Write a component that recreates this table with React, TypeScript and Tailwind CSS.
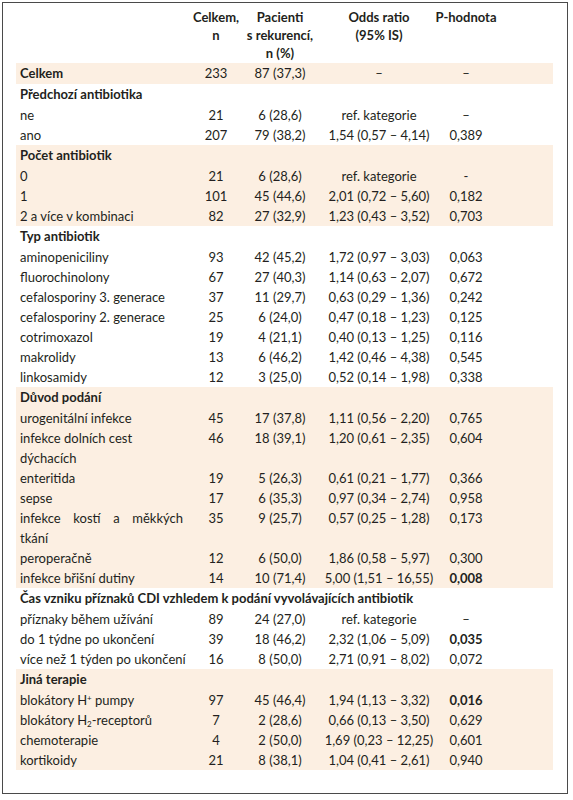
import React from "react";

type Row = {
  label: React.ReactNode;
  n?: string;
  rec?: string;
  or?: string;
  p?: string;
  bold?: boolean;
};

type Group = {
  title?: string;
  shaded: boolean;
  rows: Row[];
};

const cols = "grid grid-cols-[174px_52px_76px_122px_52px_61px]";

const justifyLine = (words: string[]) => (
  <span className="flex w-[163px] justify-between">
    {words.map((w) => (
      <span key={w}>{w}</span>
    ))}
  </span>
);

const groups: Group[] = [
  {
    shaded: true,
    rows: [{ label: <b>Celkem</b>, n: "233", rec: "87 (37,3)", or: "–", p: "–" }],
  },
  {
    title: "Předchozí antibiotika",
    shaded: false,
    rows: [
      { label: "ne", n: "21", rec: "6 (28,6)", or: "ref. kategorie", p: "–" },
      { label: "ano", n: "207", rec: "79 (38,2)", or: "1,54 (0,57 – 4,14)", p: "0,389" },
    ],
  },
  {
    title: "Počet antibiotik",
    shaded: true,
    rows: [
      { label: "0", n: "21", rec: "6 (28,6)", or: "ref. kategorie", p: "-" },
      { label: "1", n: "101", rec: "45 (44,6)", or: "2,01 (0,72 – 5,60)", p: "0,182" },
      { label: "2 a více v kombinaci", n: "82", rec: "27 (32,9)", or: "1,23 (0,43 – 3,52)", p: "0,703" },
    ],
  },
  {
    title: "Typ antibiotik",
    shaded: false,
    rows: [
      { label: "aminopeniciliny", n: "93", rec: "42 (45,2)", or: "1,72 (0,97 – 3,03)", p: "0,063" },
      { label: "fluorochinolony", n: "67", rec: "27 (40,3)", or: "1,14 (0,63 – 2,07)", p: "0,672" },
      { label: "cefalosporiny 3. generace", n: "37", rec: "11 (29,7)", or: "0,63 (0,29 – 1,36)", p: "0,242" },
      { label: "cefalosporiny 2. generace", n: "25", rec: "6 (24,0)", or: "0,47 (0,18 – 1,23)", p: "0,125" },
      { label: "cotrimoxazol", n: "19", rec: "4 (21,1)", or: "0,40 (0,13 – 1,25)", p: "0,116" },
      { label: "makrolidy", n: "13", rec: "6 (46,2)", or: "1,42 (0,46 – 4,38)", p: "0,545" },
      { label: "linkosamidy", n: "12", rec: "3 (25,0)", or: "0,52 (0,14 – 1,98)", p: "0,338" },
    ],
  },
  {
    title: "Důvod podání",
    shaded: true,
    rows: [
      { label: "urogenitální infekce", n: "45", rec: "17 (37,8)", or: "1,11 (0,56 – 2,20)", p: "0,765" },
      {
        label: (
          <>
            infekce dolních cest
            <br />
            dýchacích
          </>
        ),
        n: "46",
        rec: "18 (39,1)",
        or: "1,20 (0,61 – 2,35)",
        p: "0,604",
      },
      { label: "enteritida", n: "19", rec: "5 (26,3)", or: "0,61 (0,21 – 1,77)", p: "0,366" },
      { label: "sepse", n: "17", rec: "6 (35,3)", or: "0,97 (0,34 – 2,74)", p: "0,958" },
      {
        label: (
          <>
            {justifyLine(["infekce", "kostí", "a", "měkkých"])}
            tkání
          </>
        ),
        n: "35",
        rec: "9 (25,7)",
        or: "0,57 (0,25 – 1,28)",
        p: "0,173",
      },
      { label: "peroperačně", n: "12", rec: "6 (50,0)", or: "1,86 (0,58 – 5,97)", p: "0,300" },
      { label: "infekce břišní dutiny", n: "14", rec: "10 (71,4)", or: "5,00 (1,51 – 16,55)", p: "0,008", bold: true },
    ],
  },
  {
    title: "Čas vzniku příznaků CDI vzhledem k podání vyvolávajících antibiotik",
    shaded: false,
    rows: [
      { label: "příznaky během užívání", n: "89", rec: "24 (27,0)", or: "ref. kategorie", p: "–" },
      { label: "do 1 týdne po ukončení", n: "39", rec: "18 (46,2)", or: "2,32 (1,06 – 5,09)", p: "0,035", bold: true },
      { label: "více než 1 týden po ukončení", n: "16", rec: "8 (50,0)", or: "2,71 (0,91 – 8,02)", p: "0,072" },
    ],
  },
  {
    title: "Jiná terapie",
    shaded: true,
    rows: [
      {
        label: (
          <>
            blokátory H<sup className="text-[8px]">+</sup> pumpy
          </>
        ),
        n: "97",
        rec: "45 (46,4)",
        or: "1,94 (1,13 – 3,32)",
        p: "0,016",
        bold: true,
      },
      {
        label: (
          <>
            blokátory H<sub className="text-[8px]">2</sub>-receptorů
          </>
        ),
        n: "7",
        rec: "2 (28,6)",
        or: "0,66 (0,13 – 3,50)",
        p: "0,629",
      },
      { label: "chemoterapie", n: "4", rec: "2 (50,0)", or: "1,69 (0,23 – 12,25)", p: "0,601" },
      { label: "kortikoidy", n: "21", rec: "8 (38,1)", or: "1,04 (0,41 – 2,61)", p: "0,940" },
    ],
  },
];

const Cell = ({ children, className = "" }: { children?: React.ReactNode; className?: string }) => (
  <div className={`flex justify-center whitespace-nowrap ${className}`}>{children}</div>
);

const App = () => {
  return (
    <div className="w-[573px] h-[800px] bg-white pt-[2px] pl-[2px] text-[#231f20] font-['Lato',sans-serif] text-[13px]">
      <div className="w-[566px] h-[792px] border border-[#4a4a4a] pl-[13px] pt-[5px]">
        <div className="w-[537px]">
          <div className={`${cols} h-[55px] font-bold leading-[18px]`}>
            <div></div>
            <Cell className="text-center">
              Celkem,
              <br />n
            </Cell>
            <Cell className="text-center">
              Pacienti
              <br />s rekurencí,
              <br />n (%)
            </Cell>
            <Cell className="text-center">
              Odds ratio
              <br />
              (95% IS)
            </Cell>
            <Cell>P-hodnota</Cell>
            <div></div>
          </div>
          {groups.map((g, gi) => (
            <div key={gi} className={g.shaded ? "bg-[#fcefe2]" : ""}>
              {g.title && (
                <div className="h-[21px] pl-[4px] font-bold leading-[21px] whitespace-nowrap">{g.title}</div>
              )}
              {g.rows.map((r, ri) => (
                <div key={ri} className={`${cols} ${gi === 0 ? "h-[21px] leading-[21px]" : "leading-[20px]"}`}>
                  <div className="pl-[4px] whitespace-nowrap">{r.label}</div>
                  <Cell>{r.n}</Cell>
                  <Cell>{r.rec}</Cell>
                  <Cell>{r.or}</Cell>
                  <Cell className={r.bold ? "font-bold" : ""}>{r.p}</Cell>
                  <div></div>
                </div>
              ))}
            </div>
          ))}
        </div>
      </div>
    </div>
  );
};

export default App;
